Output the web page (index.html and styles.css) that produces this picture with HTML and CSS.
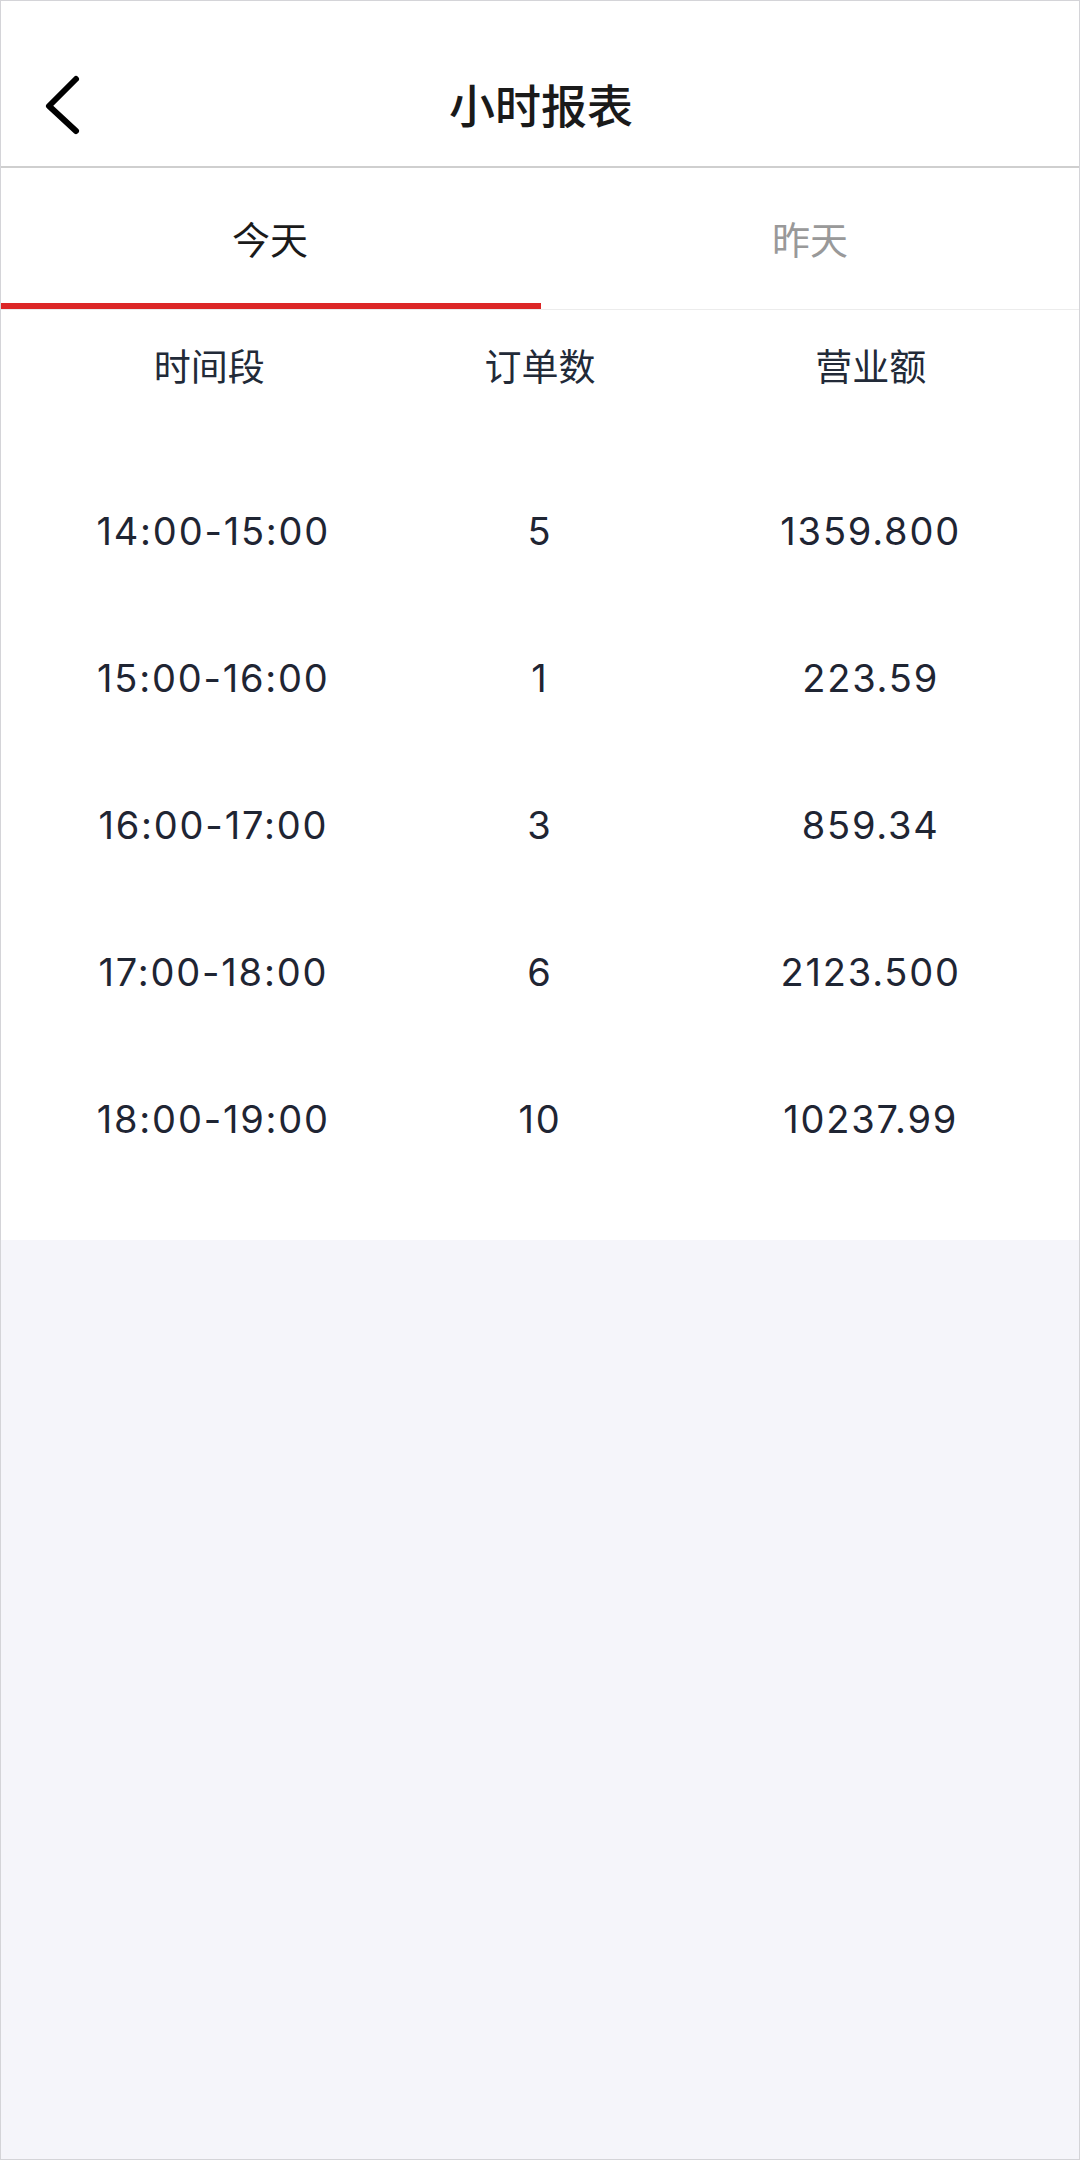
FILE: index.html
```html
<!DOCTYPE html>
<html lang="zh-CN">
<head>
<meta charset="utf-8">
<title>小时报表</title>
<link rel="stylesheet" href="styles.css">
</head>
<body>
<div class="page">
  <header class="nav">
    <span class="back" aria-label="返回">
      <svg width="50" height="70" viewBox="0 0 50 70"><path d="M38 5 L11 32 L38 57" fill="none" stroke="#000" stroke-width="6" stroke-linecap="round" stroke-linejoin="round"/></svg>
    </span>
    <h1 class="title">小时报表</h1>
  </header>
  <nav class="tabs">
    <div class="tab active">今天</div>
    <div class="tab">昨天</div>
  </nav>
  <section class="report">
    <div class="row head">
      <div class="cell">时间段</div>
      <div class="cell">订单数</div>
      <div class="cell">营业额</div>
    </div>
    <div class="body">
      <div class="row"><div class="cell">14:00-15:00</div><div class="cell">5</div><div class="cell">1359.800</div></div>
      <div class="row"><div class="cell">15:00-16:00</div><div class="cell">1</div><div class="cell">223.59</div></div>
      <div class="row"><div class="cell">16:00-17:00</div><div class="cell">3</div><div class="cell">859.34</div></div>
      <div class="row"><div class="cell">17:00-18:00</div><div class="cell">6</div><div class="cell">2123.500</div></div>
      <div class="row"><div class="cell">18:00-19:00</div><div class="cell">10</div><div class="cell">10237.99</div></div>
    </div>
  </section>
</div>
</body>
</html>
```
FILE: styles.css
```css
html, body {
  margin: 0;
  padding: 0;
}
body {
  width: 1080px;
  height: 2160px;
  background: #f5f5fa;
  font-family: Inter, "Noto Sans CJK SC", sans-serif;
}
.page {
  box-sizing: border-box;
  width: 1080px;
  height: 2160px;
  border: 1px solid #d4d4d8;
  background: #f5f5fa;
  display: flex;
  flex-direction: column;
}
.nav {
  box-sizing: border-box;
  height: 167px;
  padding-top: 38px;
  background: #fff;
  border-bottom: 2px solid #cfcfcf;
  display: flex;
  align-items: center;
  justify-content: center;
  position: relative;
}
.back {
  position: absolute;
  left: 37px;
  top: 73px;
  width: 50px;
  height: 70px;
  display: flex;
}
.title {
  margin: 0;
  font-family: "Noto Sans CJK SC", sans-serif;
  font-size: 46px;
  font-weight: 500;
  color: #1a1a1a;
  line-height: 1;
  padding-left: 2px;
}
.tabs {
  display: flex;
  height: 141px;
  background: #fff;
  border-bottom: 1px solid #ececec;
}
.tab {
  flex: 1;
  display: flex;
  align-items: center;
  justify-content: center;
  font-family: "Noto Sans CJK SC", sans-serif;
  font-size: 38px;
  color: #999;
  box-sizing: border-box;
  padding-top: 4px;
  border-bottom: 6px solid transparent;
}
.tab.active {
  color: #1a1a1a;
  border-bottom-color: #dc2626;
  padding-right: 2px;
}
.report {
  background: #fff;
  padding: 0 43px 48px;
}
.row {
  display: grid;
  grid-template-columns: 1fr 1fr 1fr;
  align-items: center;
  height: 147px;
  color: #1f2533;
  font-size: 38px;
  letter-spacing: 1.8px;
}
.row .cell {
  text-align: center;
}
.row .cell:first-child {
  padding-left: 8px;
}
.row.head {
  height: 110px;
  font-family: "Noto Sans CJK SC", sans-serif;
  font-size: 37px;
  letter-spacing: 0;
  color: #222a38;
}
.row.head .cell:first-child {
  padding-left: 0;
}
.body {
  padding-top: 37px;
}
```
